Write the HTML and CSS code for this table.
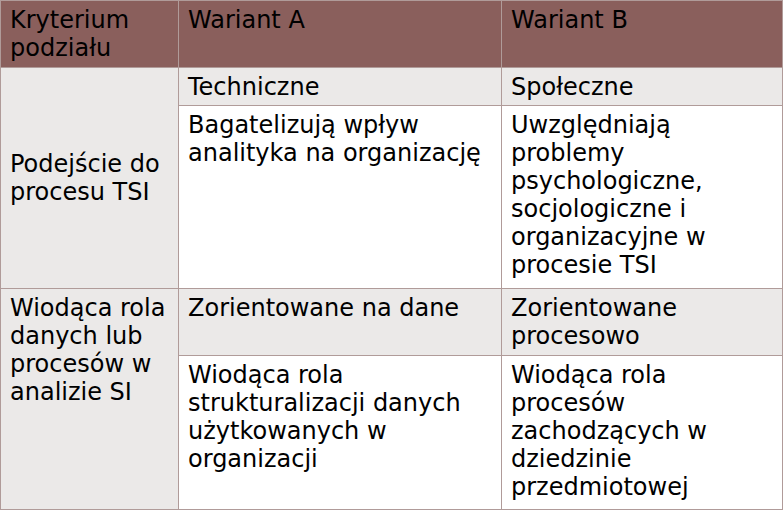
FILE: index.html
```html
<!DOCTYPE html>
<html lang="pl">
<head>
<meta charset="utf-8">
<title>Warianty</title>
<link rel="stylesheet" href="styles.css">
</head>
<body>
<table class="grid">
  <colgroup>
    <col class="c1">
    <col class="c2">
    <col class="c3">
  </colgroup>
  <thead>
    <tr class="head">
      <th>Kryterium podziału</th>
      <th>Wariant A</th>
      <th>Wariant B</th>
    </tr>
  </thead>
  <tbody>
    <tr class="shade r2">
      <td rowspan="2" class="mid">Podejście do procesu TSI</td>
      <td>Techniczne</td>
      <td>Społeczne</td>
    </tr>
    <tr class="plain r3">
      <td>Bagatelizują wpływ analityka na organizację</td>
      <td>Uwzględniają problemy psychologiczne, socjologiczne i organizacyjne w procesie TSI</td>
    </tr>
    <tr class="shade r4">
      <td rowspan="2">Wiodąca rola danych lub procesów w analizie SI</td>
      <td>Zorientowane na dane</td>
      <td>Zorientowane procesowo</td>
    </tr>
    <tr class="plain r5">
      <td>Wiodąca rola strukturalizacji danych użytkowanych w organizacji</td>
      <td>Wiodąca rola procesów zachodzących w dziedzinie przedmiotowej</td>
    </tr>
  </tbody>
</table>
</body>
</html>
```

FILE: styles.css
```css
html, body {
  margin: 0;
  padding: 0;
  background: #ffffff;
}

.grid {
  border-collapse: collapse;
  table-layout: fixed;
  width: 782px;
  font-family: "DejaVu Sans", sans-serif;
  font-size: 24px;
  line-height: 28px;
  color: #000000;
}

.c1 { width: 178px; }
.c2 { width: 323px; }
.c3 { width: 281px; }

.grid th,
.grid td {
  border: 1px solid #b09b99;
  padding: 4.5px 8px 4px 9px;
  text-align: left;
  vertical-align: top;
  font-weight: normal;
}

.head { height: 67px; }
.r2 { height: 38px; }
.r3 { height: 183px; }
.r4 { height: 67px; }
.r5 { height: 154px; }

.head th {
  background: #8a5f5c;
  color: #000000;
}

.shade td { background: #ebe9e8; }
.plain td { background: #ffffff; }

.grid td.mid { vertical-align: middle; }
```
